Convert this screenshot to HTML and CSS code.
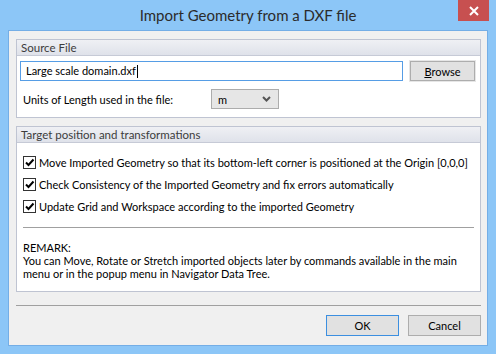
FILE: index.html
```html
<!DOCTYPE html>
<html>
<head>
<meta charset="utf-8">
<link rel="stylesheet" href="styles.css">
</head>
<body>
<div class="window">
  <div class="titlebar">
    <span class="title">Import Geometry from a DXF file</span>
    <div class="close"><svg width="10" height="10" viewBox="0 0 10 10"><path d="M1 1 L9 9 M9 1 L1 9" stroke="#fff" stroke-width="2"/></svg></div>
  </div>
  <div class="client">
    <div class="group g1">
      <div class="ghead">Source File</div>
      <div class="gbody">
        <div class="row1">
          <div class="input">Large scale domain.dxf<span class="caret"></span></div>
          <div class="btn browse"><u>B</u>rowse</div>
        </div>
        <div class="row2">
          <span class="label">Units of Length used in the file:</span>
          <div class="select"><span>m</span><svg width="9" height="6" viewBox="0 0 9 6"><path d="M1 1 L4.5 4.5 L8 1" stroke="#555" stroke-width="2" fill="none"/></svg></div>
        </div>
      </div>
    </div>
    <div class="group g2">
      <div class="ghead">Target position and transformations</div>
      <div class="gbody body2">
        <div class="checks">
          <div class="check"><span class="box"><svg width="11" height="11" viewBox="0 0 11 11"><path d="M2 5.5 L4.5 8 L9.5 2.5" stroke="#000" stroke-width="2" fill="none"/></svg></span><span class="ct">Move Imported Geometry so that its bottom-left corner is positioned at the Origin [0,0,0]</span></div>
          <div class="check"><span class="box"><svg width="11" height="11" viewBox="0 0 11 11"><path d="M2 5.5 L4.5 8 L9.5 2.5" stroke="#000" stroke-width="2" fill="none"/></svg></span><span class="ct">Check Consistency of the Imported Geometry and fix errors automatically</span></div>
          <div class="check"><span class="box"><svg width="11" height="11" viewBox="0 0 11 11"><path d="M2 5.5 L4.5 8 L9.5 2.5" stroke="#000" stroke-width="2" fill="none"/></svg></span><span class="ct">Update Grid and Workspace according to the imported Geometry</span></div>
        </div>
        <div class="remark">REMARK:<br>You can Move, Rotate or Stretch imported objects later by commands available in the main<br>menu or in the popup menu in Navigator Data Tree.</div>
      </div>
    </div>
    <div class="footer">
      <div class="btn ok">OK</div>
      <div class="btn cancel">Cancel</div>
    </div>
  </div>
</div>
</body>
</html>
```
FILE: styles.css
```css
html, body { margin: 0; padding: 0; }
body {
  width: 496px; height: 354px; overflow: hidden;
  background: #8cc6f7;
  font-family: "Lato", "Noto Sans", sans-serif;
  font-size: 11px;
  color: #000;
}
.window { width: 496px; height: 354px; }
.titlebar {
  position: relative;
  height: 30px;
  display: flex; align-items: center; justify-content: center;
}
.title { font-size: 15px; color: #2b2b2b; }
.close {
  position: absolute; right: 7px; top: 0;
  width: 31px; height: 21px; background: #c75050;
  display: flex; align-items: center; justify-content: center;
}
.client {
  box-sizing: border-box;
  margin: 0 8px; width: 480px; height: 316px;
  background: #f0f0f0;
  border: 1px solid #74aee6;
  padding: 8px 6px 0 7px;
}
.group { border: 1px solid #bfc4d2; background: #fff; }
.ghead {
  box-sizing: border-box;
  height: 16px; line-height: 15px;
  padding-left: 4px;
  font-size: 11.5px;
  color: #3c3c3c;
  background: linear-gradient(#eff0f4, #dfe2ea);
  border-bottom: 1px solid #c6cad6;
}
.g1 { height: 77px; }
.gbody { padding: 5px 5px 0 3px; }
.row1 { display: flex; align-items: center; }
.input {
  box-sizing: border-box;
  width: 383px; height: 20px;
  border: 1px solid #569de5;
  padding-left: 5px; line-height: 18px;
}
.caret { display: inline-block; width: 1px; height: 13px; background: #000; vertical-align: -3px; margin-left: 1px; }
.btn {
  box-sizing: border-box;
  background: #e1e1e1; border: 1px solid #adadad;
  display: flex; align-items: center; justify-content: center;
}
.browse { width: 65px; height: 20px; margin-left: 7px; box-shadow: 0 0 0 1px #e6e6e6; }
.row2 { display: flex; align-items: center; margin-top: 8px; }
.label { margin-left: 3px; width: 188px; }
.select {
  box-sizing: border-box;
  width: 68px; height: 20px;
  background: #e6e6e6; border: 1px solid #acacac;
  display: flex; align-items: center; justify-content: space-between;
  padding: 0 7px 0 6px;
}
.g2 { margin-top: 8px; height: 164px; }
.body2 { padding: 13px 6px 0 6px; }
.checks {
  display: flex; flex-direction: column; gap: 9px;
  padding-bottom: 14px;
  border-bottom: 1px solid #a0a0a0;
}
.check { display: flex; align-items: center; height: 13px; white-space: nowrap; }
.box {
  box-sizing: border-box; width: 13px; height: 13px;
  border: 1px solid #333; background: #fff; margin-right: 3px;
  display: flex; align-items: center; justify-content: center;
}
.remark { margin-top: 13px; line-height: 13px; white-space: nowrap; }
.footer {
  margin-top: 13px;
  border-top: 1px solid #a0a0a0;
  padding-top: 9px;
  display: flex; justify-content: flex-end; gap: 9px;
  width: 465px;
}
.ok, .cancel { width: 73px; height: 21px; }
.ok { border-color: #3c8fe0; }
```
